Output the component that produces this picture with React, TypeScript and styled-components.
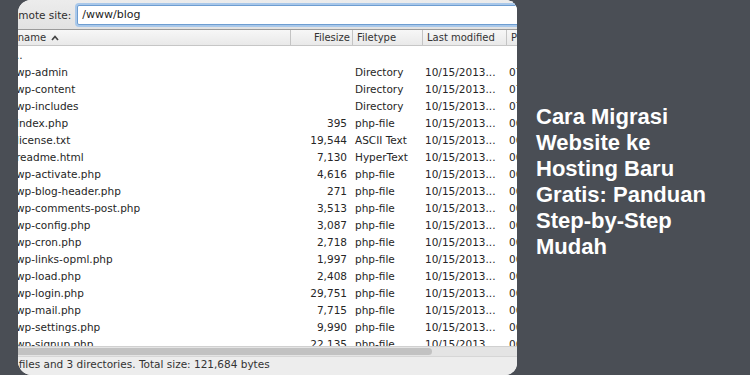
import React from "react";
import styled, { createGlobalStyle } from "styled-components";

const Global = createGlobalStyle`
  html, body { margin: 0; padding: 0; }
  body { background: #4a4e55; width: 750px; height: 375px; overflow: hidden; }
`;

const Page = styled.div`
  display: flex;
  width: 750px;
  height: 375px;
  background: #4a4e55;
`;

const Panel = styled.div`
  margin-left: 18px;
  width: 499px;
  height: 375px;
  flex: none;
  background: #ffffff;
  border-radius: 13px 11px 12px 14px;
  overflow: hidden;
  display: flex;
  flex-direction: column;
  font-family: "DejaVu Sans", sans-serif;
  font-size: 10.5px;
  color: #262626;
`;

const TopBar = styled.div`
  height: 29px;
  flex: none;
  display: flex;
  align-items: center;
  gap: 6px;
  background: linear-gradient(#ececec, #e2e2e2);
  border-bottom: 1px solid #9a9a9a;
  white-space: nowrap;
`;

const SiteLabel = styled.span`
  margin-left: -13px;
  color: #2e2e2e;
`;

const PathInput = styled.div`
  flex: none;
  width: 460px;
  height: 18px;
  background: #fff;
  border: 1px solid #6e9dd0;
  box-shadow: 0 0 0 2px #a9c8ea;
  border-radius: 2px;
  display: flex;
  align-items: center;
  padding-left: 4px;
  font-size: 11px;
  color: #222;
`;

const cols = "274px 62px 70px 84px 1fr";

const HeaderRow = styled.div`
  height: 15px;
  flex: none;
  display: grid;
  grid-template-columns: ${cols};
  margin-left: -2px;
  align-items: center;
  background: linear-gradient(#f7f7f7, #e9e9e9);
  border-bottom: 1px solid #c6c6c6;
  font-size: 10px;
  color: #333;
  white-space: nowrap;
`;

const HeadCell = styled.div<{ $right?: boolean; $first?: boolean }>`
  height: 15px;
  display: flex;
  align-items: center;
  justify-content: ${(p) => (p.$right ? "flex-end" : "flex-start")};
  padding: ${(p) => (p.$right ? "0 2px 0 0" : p.$first ? "0" : "0 0 0 4px")};
  border-left: ${(p) => (p.$first ? "none" : "1px solid #c4c4c4")};
  box-sizing: border-box;
  overflow: hidden;
  gap: 5px;
`;

const NameHead = styled.span`
  margin-left: -15px;
`;

const Caret = styled.svg`
  width: 8px;
  height: 6px;
  flex: none;
`;

const List = styled.div`
  height: 300px;
  flex: none;
  overflow: hidden;
  background: #fff;
`;

const Row = styled.div`
  display: grid;
  grid-template-columns: ${cols};
  height: 17px;
  align-items: center;
  margin-left: -2px;
  white-space: nowrap;
`;

const Cell = styled.div<{ $right?: boolean; $pad?: number }>`
  text-align: ${(p) => (p.$right ? "right" : "left")};
  padding: ${(p) => (p.$right ? "0 5px 0 0" : `0 0 0 ${p.$pad ?? 0}px`)};
  overflow: hidden;
`;

const ScrollTrack = styled.div`
  height: 10px;
  flex: none;
  background: #e4e4e4;
  border-top: 1px solid #d0d0d0;
  box-sizing: border-box;
  display: flex;
  align-items: center;
`;

const ScrollThumb = styled.div`
  width: 414px;
  height: 7px;
  background: #c2c2c2;
  border-radius: 0 4px 4px 0;
`;

const StatusBar = styled.div`
  flex: 1;
  display: flex;
  align-items: flex-start;
  padding-top: 1px;
  background: #ededed;
  border-top: 1px solid #d6d6d6;
  white-space: nowrap;
  color: #333;
`;

const StatusText = styled.span`
  margin-left: -16px;
`;

const Side = styled.div`
  padding-left: 19px;
  padding-bottom: 11px;
  align-self: center;
`;

const Title = styled.h1`
  margin: 0;
  width: 185px;
  font-family: "Liberation Sans", Arial, sans-serif;
  font-weight: 700;
  font-size: 22px;
  line-height: 26px;
  color: #ffffff;
`;

type F = { n: string; s?: string; t?: string; d?: string; p?: string };

const files: F[] = [
  { n: ".." },
  { n: "wp-admin", t: "Directory", d: "10/15/2013...", p: "07:42" },
  { n: "wp-content", t: "Directory", d: "10/15/2013...", p: "07:42" },
  { n: "wp-includes", t: "Directory", d: "10/15/2013...", p: "07:42" },
  { n: "index.php", s: "395", t: "php-file", d: "10/15/2013...", p: "06:12" },
  { n: "license.txt", s: "19,544", t: "ASCII Text", d: "10/15/2013...", p: "06:12" },
  { n: "readme.html", s: "7,130", t: "HyperText", d: "10/15/2013...", p: "06:12" },
  { n: "wp-activate.php", s: "4,616", t: "php-file", d: "10/15/2013...", p: "06:12" },
  { n: "wp-blog-header.php", s: "271", t: "php-file", d: "10/15/2013...", p: "06:12" },
  { n: "wp-comments-post.php", s: "3,513", t: "php-file", d: "10/15/2013...", p: "06:12" },
  { n: "wp-config.php", s: "3,087", t: "php-file", d: "10/15/2013...", p: "06:12" },
  { n: "wp-cron.php", s: "2,718", t: "php-file", d: "10/15/2013...", p: "06:12" },
  { n: "wp-links-opml.php", s: "1,997", t: "php-file", d: "10/15/2013...", p: "06:12" },
  { n: "wp-load.php", s: "2,408", t: "php-file", d: "10/15/2013...", p: "06:12" },
  { n: "wp-login.php", s: "29,751", t: "php-file", d: "10/15/2013...", p: "06:12" },
  { n: "wp-mail.php", s: "7,715", t: "php-file", d: "10/15/2013...", p: "06:12" },
  { n: "wp-settings.php", s: "9,990", t: "php-file", d: "10/15/2013...", p: "06:12" },
  { n: "wp-signup.php", s: "22,135", t: "php-file", d: "10/15/2013...", p: "06:12" },
];

export default function App() {
  return (
    <Page>
      <Global />
      <Panel>
        <TopBar>
          <SiteLabel>Remote site:</SiteLabel>
          <PathInput>/www/blog</PathInput>
        </TopBar>
        <HeaderRow>
          <HeadCell $first>
            <NameHead>Filename</NameHead>
            <Caret viewBox="0 0 8 6">
              <path d="M1 5 L4 1.5 L7 5" fill="none" stroke="#444" strokeWidth="1.7" />
            </Caret>
          </HeadCell>
          <HeadCell $right>Filesize</HeadCell>
          <HeadCell>Filetype</HeadCell>
          <HeadCell>Last modified</HeadCell>
          <HeadCell>Permissions</HeadCell>
        </HeaderRow>
        <List>
          {files.map((f) => (
            <Row key={f.n}>
              <Cell>{f.n}</Cell>
              <Cell $right>{f.s ?? ""}</Cell>
              <Cell $pad={3}>{f.t ?? ""}</Cell>
              <Cell $pad={3}>{f.d ?? ""}</Cell>
              <Cell $pad={3}>{f.p ?? ""}</Cell>
            </Row>
          ))}
        </List>
        <ScrollTrack>
          <ScrollThumb />
        </ScrollTrack>
        <StatusBar>
          <StatusText>18 files and 3 directories. Total size: 121,684 bytes</StatusText>
        </StatusBar>
      </Panel>
      <Side>
        <Title>Cara Migrasi Website ke Hosting Baru Gratis: Panduan Step-by-Step Mudah</Title>
      </Side>
    </Page>
  );
}
